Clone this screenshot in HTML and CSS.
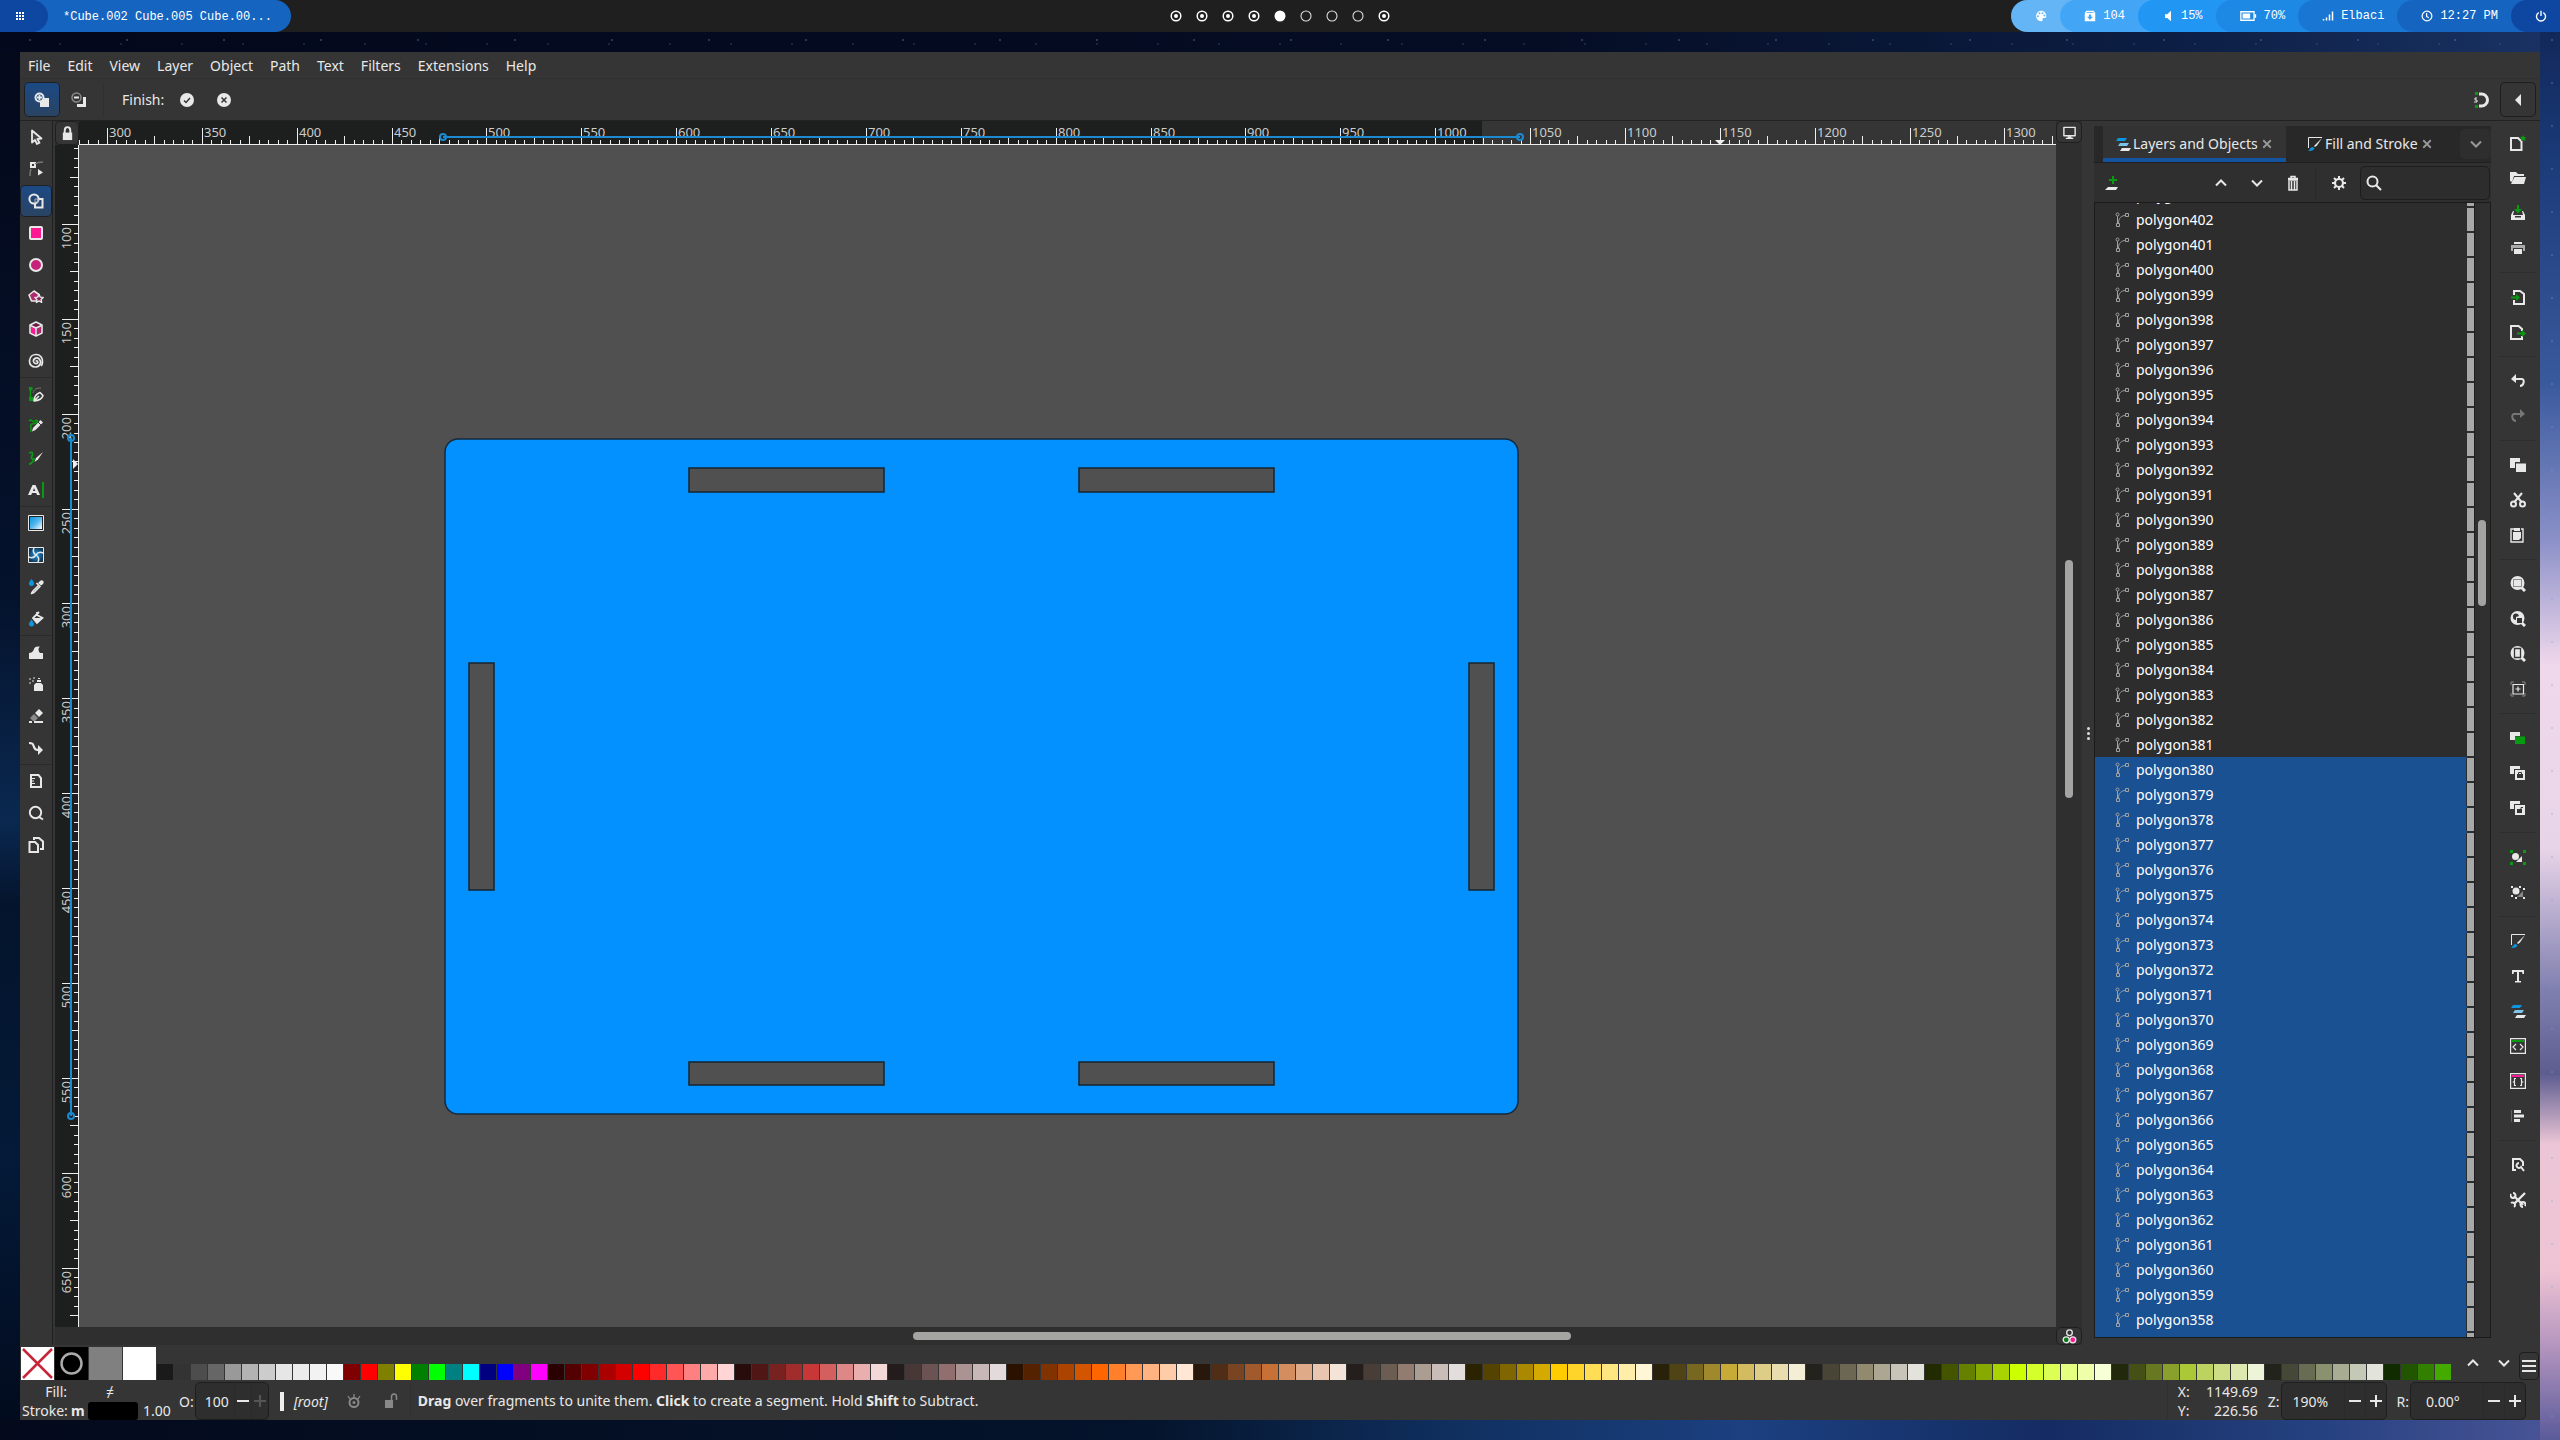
FILE: index.html
```html
<!DOCTYPE html>
<html lang="en">
<head>
<meta charset="utf-8">
<title>*Cube.002 Cube.005 Cube.00... - Inkscape</title>
<link rel="stylesheet" href="styles.css">
</head>
<body>
<svg class="sprite" aria-hidden="true">
  <symbol id="apps" viewBox="0 0 12 12"><path fill="currentColor" d="M2 2h2v2H2zm3 0h2v2H5zm3 0h2v2H8zM2 5h2v2H2zm3 0h2v2H5zm3 0h2v2H8zM2 8h2v2H2zm3 0h2v2H5zm3 0h2v2H8z"/></symbol>
  <symbol id="palette" viewBox="0 0 16 16"><path fill="currentColor" fill-rule="evenodd" d="M8 1a7 7 0 1 0 1 14c1.400 0 1.500-1 1-2-.6-1.500.2-2.500 1.500-2.500H13c1.300 0 2-1 2-2.500C15 4 12 1 8 1zM4 7a1.300 1.300 0 1 1 0 2.600A1.300 1.300 0 0 1 4 7zm2-4a1.300 1.300 0 1 1 0 2.600A1.300 1.300 0 0 1 6 3zm4 0a1.300 1.300 0 1 1 0 2.600A1.300 1.300 0 0 1 10 3zm2.500 3a1.300 1.300 0 1 1 0 2.600 1.300 1.300 0 0 1 0-2.600z"/></symbol>
  <symbol id="update" viewBox="0 0 16 16"><path fill="currentColor" fill-rule="evenodd" d="M3 1h10l2 3v11H1V4zM3 3.500h10l-.5-1h-9zM6.500 6v3H4l4 4 4-4H9.500V6z"/></symbol>
  <symbol id="volume" viewBox="0 0 16 16"><path fill="currentColor" d="M4 5.500h3L12 1v14l-5-4.500H4z"/></symbol>
  <symbol id="battery" viewBox="0 0 20 12"><path fill="none" stroke="currentColor" stroke-width="1.500" d="M1 1h15.500v10H1z"/><path fill="currentColor" d="M3 3h9v6H3zM17 4h2v4h-2z"/></symbol>
  <symbol id="signal" viewBox="0 0 16 16"><path fill="currentColor" d="M1 12h2v2H1zm4-2h2v4H5zm4-4h2v8H9zm4-4h2v12h-2z"/></symbol>
  <symbol id="clock" viewBox="0 0 16 16"><circle cx="8" cy="8" r="6.500" fill="none" stroke="currentColor" stroke-width="1.600"/><path fill="none" stroke="currentColor" stroke-width="1.600" d="M7.500 4v4.500l3 2"/></symbol>
  <symbol id="power" viewBox="0 0 16 16"><path fill="none" stroke="currentColor" stroke-width="1.800" d="M5 3.500a6 6 0 1 0 6 0M8 1v7"/></symbol>

  <symbol id="union" viewBox="0 0 16 16"><path fill="currentColor" d="M6 6h9v9H6z"/><circle cx="5.500" cy="5.500" r="4" fill="#1d4983" stroke="currentColor" stroke-width="2"/><path stroke="currentColor" stroke-width="1.800" d="M3 5.500h5M5.500 3v5"/></symbol>
  <symbol id="subtract" viewBox="0 0 16 16"><path fill="currentColor" d="M15 5v10H6v-3h6V5z"/><circle cx="5.500" cy="5.500" r="4.500" fill="none" stroke="#888" stroke-width="1.500"/><path stroke="currentColor" stroke-width="2" d="M3 5.500h5"/></symbol>
  <symbol id="accept" viewBox="0 0 16 16"><circle cx="8" cy="8" r="7" fill="currentColor"/><path fill="none" stroke="#353535" stroke-width="1.500" d="M5 8.500l2 2 4-4.500"/></symbol>
  <symbol id="cancel" viewBox="0 0 16 16"><circle cx="8" cy="8" r="7" fill="currentColor"/><path fill="none" stroke="#353535" stroke-width="1.500" d="M5.500 5.500l5 5m0-5l-5 5"/></symbol>
  <symbol id="snap" viewBox="0 0 16 16"><path fill="none" stroke="currentColor" stroke-width="3" d="M6 2h2.500a6 6 0 0 1 0 12H6"/><path fill="#0a9a12" d="M2 0h3v3H2zm0 13h3v3H2z"/><path fill="none" stroke="currentColor" d="M4 6H2v2h2v2H1"/></symbol>
  <symbol id="tri-left" viewBox="0 0 16 16"><path fill="currentColor" d="M5 8l6-6v12z"/></symbol>

  <symbol id="select" viewBox="0 0 16 16"><path fill="#444" stroke="currentColor" stroke-width="1.800" stroke-linejoin="round" d="M4 1.500v12l3-2.500 2 4 2.500-1.200-2-3.800 4-.5z"/></symbol>
  <symbol id="node" viewBox="0 0 16 16"><path fill="none" stroke="currentColor" stroke-width="2" d="M3 2h4v4H3z"/><path fill="none" stroke="#777" stroke-width="1.500" d="M7 3c3-2 5-2 8-2M3 8c-1 2-1 4-1 7"/><path fill="currentColor" d="M10 8l5 3.500-5 3z"/></symbol>
  <symbol id="builder" viewBox="0 0 16 16"><circle cx="6" cy="6" r="4.600" fill="none" stroke="currentColor" stroke-width="2"/><path fill="none" stroke="currentColor" stroke-width="2" d="M11 6h3.500v8.500H7V10"/><path fill="none" stroke="#aab" d="M7 6h3v3H7z"/></symbol>
  <symbol id="rect" viewBox="0 0 16 16"><rect x="2" y="2" width="12" height="12" rx="1" fill="#ff1a94" stroke="currentColor" stroke-width="2"/></symbol>
  <symbol id="ellipse" viewBox="0 0 16 16"><circle cx="8" cy="8" r="6" fill="#c8237a" stroke="currentColor" stroke-width="2"/></symbol>
  <symbol id="star" viewBox="0 0 16 16"><path fill="#ad2a6c" stroke="currentColor" stroke-width="1.600" stroke-linejoin="round" d="M6 2l5 3.500L9.500 12h-6L1 6z"/><path fill="#7a2450" stroke="currentColor" stroke-width="1.400" stroke-linejoin="round" d="M11 5.500l1.300 2.600 2.900.3-2.100 2 .6 3-2.700-1.500-2.600 1.500.5-3-2-2 2.800-.3z"/></symbol>
  <symbol id="box3d" viewBox="0 0 16 16"><path fill="#6a1c48" stroke="currentColor" stroke-width="1.600" stroke-linejoin="round" d="M8 1l6 3v8l-6 3-6-3V4z"/><path fill="#ff1a94" d="M3 5.500l4 2v6l-4-2z"/><path fill="#ad2a6c" d="M13 5.500l-4 2v6l4-2z"/><path fill="none" stroke="currentColor" stroke-width="1.600" d="M2.500 4.500L8 7l5.500-2.500M8 7v7.500"/></symbol>
  <symbol id="spiral" viewBox="0 0 16 16"><path fill="none" stroke="currentColor" stroke-width="1.700" d="M8 8.500c.5-1 2-.5 1.800.8-.2 1.700-3.800 1.900-4.300-.6C5 5.500 8.500 4 11 5.800c3 2.400 1.500 7.700-3 8.200-4 .3-6.800-2.500-6.500-6.500C2 3.500 5 1.300 8.500 1.500c4 .3 6.500 3.500 6 8-.2 1.500-.6 2.500-1.300 3.500"/></symbol>
  <symbol id="pen" viewBox="0 0 16 16"><path stroke="#0a9a12" stroke-width="1.500" d="M2.500 2v11"/><path fill="#0a9a12" d="M1 1h3.500v3.500H1zM1 11h4v4H1z"/><path fill="none" stroke="#777" d="M5 7c1-4 4-5 8-5"/><path fill="none" stroke="currentColor" stroke-width="1.600" stroke-linejoin="round" d="M6 15c0-5 2-7 6-8.500l3 3C14 13 11 14.500 6 15zl5-5"/></symbol>
  <symbol id="pencil" viewBox="0 0 16 16"><path fill="none" stroke="#0a9a12" stroke-width="1.500" d="M1 3c3-3 3 2 6 0 2-2 4 0 1 2-3 1-7 1-5 4 1 1-1 3 0 5"/><path fill="currentColor" d="M12.500 2L15 4.500 7.500 12l-3.500 1.500L5 10z"/><path stroke="#353535" d="M10 4l3 3"/></symbol>
  <symbol id="brush" viewBox="0 0 16 16"><path fill="none" stroke="#0a9a12" stroke-width="1.800" d="M1 3c4-2 4 1 3 3s-1 3 2 3c-1 2-2 5-5 5"/><path fill="currentColor" d="M15 2L10 9.500 6.500 12 8 8z"/></symbol>
  <symbol id="texttool" viewBox="0 0 16 16"><path fill="currentColor" fill-rule="evenodd" d="M4.500 3h3L12 13H9l-.8-2H4l-.8 2H0zM6 6L5 9h2.300z"/><path fill="#0a9a12" d="M14 0h2v16h-2z"/></symbol>
  <symbol id="gradient" viewBox="0 0 16 16"><linearGradient id="lg" x1="0" y1="0" x2="1" y2="1"><stop offset="0" stop-color="#0d96e0"/><stop offset=".5" stop-color="#55b7ee"/><stop offset="1" stop-color="#fff"/></linearGradient><path fill="#222" stroke="currentColor" d="M.5.500h15v15H.5z"/><path fill="url(#lg)" d="M2 2h12v12H2z"/></symbol>
  <symbol id="mesh" viewBox="0 0 16 16"><radialGradient id="rg"><stop offset="0" stop-color="#1da0f0"/><stop offset="1" stop-color="#143a5a"/></radialGradient><path fill="url(#rg)" stroke="currentColor" d="M.5.500h15v15H.5z"/><path fill="none" stroke="currentColor" stroke-width="1.500" d="M8 8C5 6 5 3 6 1M8 8c2-3 5-3 7-2M8 8c3 2 3 5 2 7M8 8c-2 3-5 3-7 2"/></symbol>
  <symbol id="dropper" viewBox="0 0 16 16"><path fill="#0d96e0" d="M3.500 0C5 2 6 3 6 4.500a2.500 2.500 0 0 1-5 0C1 3 2 2 3.500 0z"/><path fill="currentColor" d="M12 2c2-2 5 0 3 3l-2 1.500L10 4z"/><path fill="none" stroke="currentColor" stroke-width="1.600" stroke-linejoin="round" d="M11 6L5 12l-1.500 2.500L6 13.500l6-6M8.500 4l4 4"/></symbol>
  <symbol id="bucket" viewBox="0 0 16 16"><path fill="#0d96e0" d="M3.500 8.500C5 11 6 11.500 6 13a2.500 2.500 0 0 1-5 0c0-1.500 1-2 2.500-4.500z"/><path fill="none" stroke="currentColor" stroke-width="1.800" d="M9 1v3l5.500 3L9 12 5 7l6-6"/><path fill="currentColor" d="M5 7h9.500L9 12z"/></symbol>
  <symbol id="tweak" viewBox="0 0 16 16"><path fill="currentColor" d="M1 15V9c2 0 4-1 5-4 1-2.500 4-3 6-2-2 .5-2 4 0 6h3v6z"/></symbol>
  <symbol id="spray" viewBox="0 0 16 16"><path fill="currentColor" d="M6 9l2-2h5l2 2v6H6zm3-5h4v2H9zm1-2h2v1h-2z"/><path fill="#888" d="M1 2h2v2H1zm4-1h2v2H5zM1 6h2v2H1zm3-2h2v2H4z"/></symbol>
  <symbol id="eraser" viewBox="0 0 16 16"><path fill="currentColor" d="M11 1l4 4-4 4-4-4z"/><path fill="#8a8a8a" d="M6 6l4 4-3 3H5L2 10z"/><path fill="currentColor" d="M1 13h3v2H1zm5 0h9v2H6z"/></symbol>
  <symbol id="connector" viewBox="0 0 16 16"><path fill="none" stroke="currentColor" stroke-width="2.200" d="M1 3c4 0 4 1 5 4 1 2.500 2 3 6 3"/><path fill="currentColor" d="M10 5l5 5-5 5z"/></symbol>
  <symbol id="measure" viewBox="0 0 16 16"><path fill="none" stroke="currentColor" stroke-width="2" d="M3 2h7.500l2.500 3v9H3z"/><path stroke="currentColor" d="M3 5.500h4m-4 2.500h3m-3 2.500h4"/></symbol>
  <symbol id="zoomtool" viewBox="0 0 16 16"><circle cx="7.500" cy="7.500" r="5.700" fill="none" stroke="currentColor" stroke-width="1.900"/><path stroke="currentColor" stroke-width="2" d="M11 12l4 2.500"/></symbol>
  <symbol id="pages" viewBox="0 0 16 16"><path fill="none" stroke="currentColor" stroke-width="2" d="M1.500 5H7l3 3v7H1.500zM6 3V1h5l4 3.500V12h-3"/></symbol>

  <symbol id="lock" viewBox="0 0 16 16"><path fill="currentColor" d="M3 7h10v8H3z"/><path fill="none" stroke="currentColor" stroke-width="2" d="M5 8V5c0-5 6-5 6 0v3"/></symbol>
  <symbol id="unlock" viewBox="0 0 16 16"><path fill="currentColor" d="M2 7h8v8H2z"/><path fill="none" stroke="currentColor" stroke-width="1.500" d="M8.500 8V4c0-4 5-4 5 0v3"/></symbol>
  <symbol id="monitor" viewBox="0 0 16 16"><path fill="none" stroke="currentColor" stroke-width="1.500" stroke-linejoin="round" d="M2 2.500h12v9H2z"/><path fill="currentColor" d="M6 12h4v1.500h2V15H4v-1.500h2z"/></symbol>
  <symbol id="cms" viewBox="0 0 16 16"><g stroke="currentColor" stroke-width="1.400"><circle cx="8" cy="4" r="3" fill="none"/><circle cx="4.500" cy="11.500" r="3.200" fill="#0a7a12"/><circle cx="11.500" cy="11.500" r="3.200" fill="#ff1a94"/></g></symbol>

  <symbol id="layers" viewBox="0 0 16 16"><path fill="#0d96e0" d="M3 2h9l-2 3H1z"/><path fill="#7cc4ec" d="M5 7h9l-2 3H3z"/><path fill="currentColor" d="M7 12h9l-2 3H5z"/></symbol>
  <symbol id="fillstroke" viewBox="0 0 16 16"><path fill="none" stroke="currentColor" d="M1.500 12V1.500H15"/><path fill="currentColor" d="M15 2L10 9.500 8 11 7 10z"/><path fill="#0d96e0" d="M6 11l1.500 1.500C6 15 3 15 1 15c2-1 2-4 5-4z"/></symbol>
  <symbol id="cross" viewBox="0 0 16 16"><path stroke="currentColor" stroke-width="2.400" d="M3 3l10 10m0-10l-10 10"/></symbol>
  <symbol id="down" viewBox="0 0 16 16"><path fill="none" stroke="currentColor" stroke-width="2" d="M3 5.500l5 5 5-5"/></symbol>
  <symbol id="up" viewBox="0 0 16 16"><path fill="none" stroke="currentColor" stroke-width="2" d="M3 10.500l5-5 5 5"/></symbol>
  <symbol id="addlayer" viewBox="0 0 16 16"><path fill="#0a9a12" d="M8 1h2v3h3v2h-3v3H8V6H5V4h3z"/><path fill="currentColor" d="M4 12h10l-2 3H1z"/></symbol>
  <symbol id="trash" viewBox="0 0 16 16"><path fill="none" stroke="currentColor" stroke-width="1.500" d="M3 5h10M4 6v9h8V6M3 3.500h10M6 3V1.500h4V3M6.500 6v9M9.500 6v9"/></symbol>
  <symbol id="gear" viewBox="0 0 16 16"><circle cx="8" cy="8" r="4" fill="none" stroke="currentColor" stroke-width="2.200"/><path stroke="currentColor" stroke-width="2" d="M8 1v3m0 8v3M1 8h3m8 0h3M3 3l2 2m6 6l2 2m0-10l-2 2m-6 6l-2 2"/></symbol>
  <symbol id="search" viewBox="0 0 16 16"><circle cx="6.500" cy="6.500" r="5" fill="none" stroke="currentColor" stroke-width="2"/><path stroke="currentColor" stroke-width="2.200" d="M10 10l5 5"/></symbol>
  <symbol id="path" viewBox="0 0 15 16"><g fill="none" stroke="currentColor" stroke-width="1"><circle cx="2.500" cy="2.500" r="1.500"/><path d="M10.500 1.500h3v3h-3zM1.500 11.500h3v3h-3zM2.500 4v7.500M3.500 11c0-5 3-7.500 7-7.500"/></g></symbol>

  <symbol id="new" viewBox="0 0 16 16"><path fill="none" stroke="currentColor" stroke-width="2" d="M1 3h7l3.500 3.500V15H1z"/><path fill="#0a9a12" d="M13 0l1 2h2l-1 1.500.5 2.500L13 5l-2 1 .3-2.500L10 2h2z"/></symbol>
  <symbol id="open" viewBox="0 0 16 16"><path fill="currentColor" d="M0 2h6l2 2h6v2H4l-2 6-2-1zM4.500 7H16l-2 7H1z"/></symbol>
  <symbol id="save" viewBox="0 0 16 16"><path fill="#0a9a12" d="M7 0h2v4h3L8 8.500 4 4h3z"/><path fill="currentColor" fill-rule="evenodd" d="M3 6h1l-1 4h10l-1-4h1l2 4v5H1v-5zm2 5v1.500h6V11z"/></symbol>
  <symbol id="print" viewBox="0 0 16 16"><path fill="currentColor" d="M4 2h8v2H4zM4 9h8v5H4z"/><path fill="#aaa" d="M1 5h14v6h-2V8H3v3H1z"/></symbol>
  <symbol id="import" viewBox="0 0 16 16"><path fill="none" stroke="currentColor" stroke-width="2" d="M4 6V2h6l4 3v10H4v-4"/><path fill="#0a9a12" d="M1 7.500h5V5l4 3.500L6 12V9.500H1z"/></symbol>
  <symbol id="export" viewBox="0 0 16 16"><path fill="none" stroke="currentColor" stroke-width="2" d="M12 7V5L8.500 2H1v13h11v-3"/><path fill="#0a9a12" d="M7 8.500h5V6l4 3.500-4 3.500v-2.500H7z"/></symbol>
  <symbol id="undo" viewBox="0 0 16 16"><path fill="none" stroke="currentColor" stroke-width="2" d="M5 6h7c3 0 2 7-2 7"/><path fill="currentColor" d="M6 1v9L1 6z"/></symbol>
  <symbol id="redo" viewBox="0 0 16 16"><path fill="none" stroke="currentColor" stroke-width="2" d="M11 6H4C1 6 2 13 6 13"/><path fill="currentColor" d="M10 1v9l5-4z"/></symbol>
  <symbol id="copy" viewBox="0 0 16 16"><path fill="currentColor" d="M0 1h10v4H5v6H0zM6 6.500h10V15H6z"/></symbol>
  <symbol id="cut" viewBox="0 0 16 16"><g fill="none" stroke="currentColor" stroke-width="2"><circle cx="3.500" cy="12" r="2.500"/><circle cx="12.500" cy="12" r="2.500"/><path d="M4 1l7.500 9M12 1l-7.500 9"/></g></symbol>
  <symbol id="paste" viewBox="0 0 16 16"><path fill="none" stroke="currentColor" stroke-width="1.400" d="M4 2H1v13h12V2h-2"/><path fill="currentColor" d="M4 1h6v3H4zM3 5h8v6l-2 2H3z"/></symbol>
  <symbol id="zsel" viewBox="0 0 16 16"><circle cx="7.500" cy="7" r="7" fill="currentColor"/><path stroke="currentColor" stroke-width="3" d="M11 11l4 4"/><path fill="none" stroke="#353535" stroke-dasharray="1 1" d="M3.500 3.500h8v7h-8z"/></symbol>
  <symbol id="zdraw" viewBox="0 0 16 16"><circle cx="7.500" cy="7" r="7" fill="currentColor"/><path stroke="currentColor" stroke-width="3" d="M11 11l4 4"/><path fill="#353535" d="M7 7h5v5H7zM3 6a3 3 0 0 1 6-1L6 6v3a3 3 0 0 1-3-3z"/></symbol>
  <symbol id="zpage" viewBox="0 0 16 16"><circle cx="7.500" cy="7" r="7" fill="currentColor"/><path stroke="currentColor" stroke-width="3" d="M11 11l4 4"/><path fill="none" stroke="#353535" stroke-width="1.300" d="M4.500 2.500h6v9h-6z"/></symbol>
  <symbol id="zcenter" viewBox="0 0 16 16"><path fill="none" stroke="#888" d="M1 4V1h3m8 0h3v3m0 8v3h-3m-8 0H1v-3"/><path fill="none" stroke="currentColor" stroke-width="1.200" d="M3 3.500h10.500v9.500H3zM8 5.500v5M5.500 8h5"/></symbol>
  <symbol id="dup" viewBox="0 0 16 16"><path fill="currentColor" d="M0 2h10v4H5v4H0z"/><path fill="#0a9a12" d="M5 6.500h10V14H5z"/></symbol>
  <symbol id="clone" viewBox="0 0 16 16"><path fill="currentColor" d="M0 1h10v3H4v5H0zM5 5h10v10H5z"/><path fill="#353535" d="M7 9h6v4H7z"/><path fill="none" stroke="#353535" d="M8.500 9V7.500h3V9"/></symbol>
  <symbol id="unclone" viewBox="0 0 16 16"><path fill="currentColor" d="M0 1h10v3H4v5H0zM5 5h10v10H5z"/><path fill="#353535" d="M7 9h5v4H7z"/><path fill="none" stroke="#353535" d="M11 9V7.500h2"/></symbol>
  <symbol id="group" viewBox="0 0 16 16"><path fill="#0a9a12" d="M0 1h3v3H0zm13 0h3v3h-3zM0 13h3v3H0zm13 0h3v3h-3z"/><path fill="currentColor" d="M12 7v6H6l2-2z"/><circle cx="5.500" cy="7.500" r="3.500" fill="currentColor"/></symbol>
  <symbol id="ungroup" viewBox="0 0 16 16"><path fill="currentColor" d="M1 2h2v2H1zm8 0h2v2H9zm4 2h2v2h-2zM1 11h2v2H1zm4 2h2v2H5zm8 0h2v2h-2z"/><path fill="#888" d="M13 7v6H7l2-2z"/><circle cx="6" cy="7" r="3.500" fill="currentColor"/></symbol>
  <symbol id="type" viewBox="0 0 16 16"><path fill="currentColor" d="M2 2h12v4h-1.500L12 4H9v9h2v1.500H5V13h2V4H4l-.5 2H2z"/></symbol>
  <symbol id="xml" viewBox="0 0 16 16"><path fill="none" stroke="currentColor" stroke-width="1.200" d="M.6.600h14.800v14.800H.6zM6 6l-3 3 3 3m4-6l3 3-3 3"/><path fill="#0a9a12" d="M2 2h12v2H2z"/></symbol>
  <symbol id="css" viewBox="0 0 16 16"><path fill="none" stroke="currentColor" stroke-width="1.200" d="M.6.600h14.800v14.800H.6zM6 5.500H4.500v3l-1 .5 1 .5v3H6m4-7h1.500v3l1 .5-1 .5v3H10"/><path fill="#ff1a94" d="M2 2h12v2H2z"/></symbol>
  <symbol id="align" viewBox="0 0 16 16"><path fill="#0a9a12" d="M1 2h1v12H1z"/><path fill="currentColor" d="M4 2h7v3H4zm0 4.500h10v3H4zM4 11h6v3H4z"/></symbol>
  <symbol id="docprops" viewBox="0 0 16 16"><path fill="none" stroke="currentColor" stroke-width="2" d="M6 13H3V2h7l3 3v4"/><path fill="none" stroke="currentColor" stroke-width="2" d="M9 6a2.500 2.500 0 1 0 2 4l3 4"/></symbol>
  <symbol id="prefs" viewBox="0 0 16 16"><path stroke="currentColor" stroke-width="2.400" d="M15 1L4 12M4 4l9 9"/><path fill="none" stroke="currentColor" stroke-width="2" d="M1 2a2.500 2.500 0 1 0 2-1M15 14a2.500 2.500 0 1 0-2 1M1 11a2.500 2.500 0 1 1 3 4"/></symbol>
  <symbol id="eye" viewBox="0 0 16 16"><circle cx="8" cy="9.500" r="4.500" fill="none" stroke="currentColor" stroke-width="2"/><circle cx="8" cy="9.500" r="1.500" fill="currentColor"/><path stroke="currentColor" stroke-width="1.300" d="M8 5V1M4 6L2 3m10 3l2-3"/></symbol>
  <symbol id="minus" viewBox="0 0 16 16"><path fill="currentColor" d="M2 7h12v2H2z"/></symbol>
  <symbol id="plus" viewBox="0 0 16 16"><path fill="currentColor" d="M2 7h5V2h2v5h5v2H9v5H7V9H2z"/></symbol>
  <symbol id="menu" viewBox="0 0 16 16"><path fill="currentColor" d="M1 2h14v2H1zm0 5h14v2H1zm0 5h14v2H1z"/></symbol>
  <symbol id="ws-used" viewBox="0 0 12 12"><circle cx="6" cy="6" r="4.800" fill="none" stroke="#fff" stroke-width="1.500"/><circle cx="6" cy="6" r="2" fill="#fff"/></symbol>
  <symbol id="ws-here" viewBox="0 0 12 12"><circle cx="6" cy="6" r="5.500" fill="#fff"/></symbol>
  <symbol id="ws-free" viewBox="0 0 12 12"><circle cx="6" cy="6" r="5" fill="none" stroke="#ddd" stroke-width="1.100"/></symbol>
</svg>

<header class="topbar">
  <div class="topbar-left">
    <button class="pill pill-apps" aria-label="Applications"><svg><use href="#apps"/></svg></button>
    <span class="pill pill-title">*Cube.002 Cube.005 Cube.00...</span>
  </div>
  <nav class="workspaces" aria-label="Workspaces">
    <svg><use href="#ws-used"/></svg><svg><use href="#ws-used"/></svg><svg><use href="#ws-used"/></svg><svg><use href="#ws-used"/></svg><svg><use href="#ws-here"/></svg><svg><use href="#ws-free"/></svg><svg><use href="#ws-free"/></svg><svg><use href="#ws-free"/></svg><svg><use href="#ws-used"/></svg>
  </nav>
  <div class="topbar-right">
    <span class="status s1"><svg><use href="#palette"/></svg></span>
    <span class="status s2"><svg><use href="#update"/></svg>104</span>
    <span class="status s3"><svg><use href="#volume"/></svg>15%</span>
    <span class="status s4"><svg class="battery"><use href="#battery"/></svg>70%</span>
    <span class="status s5"><svg><use href="#signal"/></svg>Elbaci</span>
    <span class="status s6"><svg><use href="#clock"/></svg>12:27 PM</span>
    <button class="status s7" aria-label="Power"><svg><use href="#power"/></svg></button>
  </div>
</header>

<main class="desktop">
<div class="window">
  <nav class="menubar">
    <button>File</button><button>Edit</button><button>View</button><button>Layer</button><button>Object</button><button>Path</button><button>Text</button><button>Filters</button><button>Extensions</button><button>Help</button>
  </nav>
  <div class="toolbar">
    <button class="mode active" aria-label="Union"><svg><use href="#union"/></svg></button>
    <button class="mode" aria-label="Subtract"><svg><use href="#subtract"/></svg></button>
    <span class="finish">Finish:</span>
    <button class="mode" aria-label="Accept"><svg><use href="#accept"/></svg></button>
    <button class="mode" aria-label="Cancel"><svg><use href="#cancel"/></svg></button>
    <button class="mode push" aria-label="Snapping"><svg><use href="#snap"/></svg></button>
    <button class="mode framed" aria-label="Snap options"><svg><use href="#tri-left"/></svg></button>
  </div>

  <div class="work">
    <div class="toolbox" data-icons="select node builder* rect ellipse star box3d spiral | pen pencil brush texttool | gradient mesh dropper bucket | tweak spray eraser connector | measure zoomtool pages"></div>

    <div class="editor">
      <button class="corner" aria-label="Lock guides"><svg><use href="#lock"/></svg></button>
      <svg class="ruler-h" id="ruler-h"></svg>
      <button class="corner display" aria-label="Display mode"><svg><use href="#monitor"/></svg></button>
      <svg class="ruler-v" id="ruler-v"></svg>
      <svg class="canvas">
        <g fill="#0291ff" stroke="#152a3c" stroke-width="1.500">
          <rect x="366" y="294" width="1073" height="675" rx="13"/>
        </g>
        <g fill="#505050" stroke="#17242f" stroke-width="1.500">
          <rect x="610" y="323" width="195" height="24"/>
          <rect x="1000" y="323" width="195" height="24"/>
          <rect x="610" y="917" width="195" height="23"/>
          <rect x="1000" y="917" width="195" height="23"/>
          <rect x="390" y="518" width="25" height="227"/>
          <rect x="1390" y="518" width="25" height="227"/>
        </g>
      </svg>
      <div class="vscroll"><span></span></div>
      <div class="hscroll"><span></span></div>
      <button class="corner cms" aria-label="Color management"><svg><use href="#cms"/></svg></button>
    </div>

    <div class="handle"><i></i><i></i><i></i></div>

    <section class="dock">
      <div class="tabs">
        <div class="tab current"><button class="tab-label"><svg><use href="#layers"/></svg>Layers and Objects</button><button class="tab-close" aria-label="Close"><svg><use href="#cross"/></svg></button></div>
        <div class="tab second"><button class="tab-label"><svg><use href="#fillstroke"/></svg>Fill and Stroke</button><button class="tab-close" aria-label="Close"><svg><use href="#cross"/></svg></button></div>
        <button class="tab-more" aria-label="More"><svg><use href="#down"/></svg></button>
      </div>
      <div class="panel-tools">
        <button class="add" aria-label="Add layer"><svg><use href="#addlayer"/></svg></button>
        <button aria-label="Raise"><svg><use href="#up"/></svg></button>
        <button aria-label="Lower"><svg><use href="#down"/></svg></button>
        <button aria-label="Delete"><svg><use href="#trash"/></svg></button>
        <button class="settings" aria-label="Settings"><svg><use href="#gear"/></svg></button>
        <label class="search"><svg><use href="#search"/></svg><input type="text" aria-label="Search"></label>
      </div>
      <div class="tree">
        <ul class="objects" id="objects"></ul>
        <div class="tree-scroll"><span></span></div>
      </div>
    </section>

    <div class="commands" data-icons="new open save print | import export | undo redo- | copy cut paste | zsel zdraw zpage zcenter | dup clone unclone | group ungroup | fillstroke type layers xml css align | docprops prefs"></div>
  </div>

  <div class="palette-bar">
    <div class="pinned">
      <button class="none" aria-label="None"><svg viewBox="0 0 33 33"><path stroke="#c4263a" stroke-width="2.500" d="M2 2l29 29M31 2L2 31"/></svg></button>
      <button class="black" aria-label="Black"><svg viewBox="0 0 33 33"><circle cx="16.500" cy="16.500" r="10" fill="none" stroke="#aaa" stroke-width="2.500"/></svg></button>
      <button class="grey" aria-label="Grey"></button>
      <button class="white" aria-label="White"></button>
    </div>
    <div class="swatches" id="swatches"></div>
    <div class="palette-nav">
      <button aria-label="Previous row"><svg><use href="#up"/></svg></button>
      <button aria-label="Next row"><svg><use href="#down"/></svg></button>
      <button class="palette-menu" aria-label="Palette menu"><svg><use href="#menu"/></svg></button>
    </div>
  </div>

  <footer class="statusbar">
    <div class="style">
      <span class="key">Fill:</span><span class="unequal">≠</span><span></span>
      <span class="key">Stroke:</span><span class="stroke"><b>m</b><i class="chip"></i></span><span>1.00</span>
    </div>
    <label class="letter" for="opacity">O:</label>
    <div class="spin spin-o"><input id="opacity" value="100"><button aria-label="Less"><svg><use href="#minus"/></svg></button><button class="off" aria-label="More"><svg><use href="#plus"/></svg></button></div>
    <button class="layer"><em>[root]</em></button>
    <button class="dim" aria-label="Visibility"><svg><use href="#eye"/></svg></button>
    <button class="dim" aria-label="Lock"><svg><use href="#unlock"/></svg></button>
    <p class="hint"><b>Drag</b> over fragments to unite them. <b>Click</b> to create a segment. Hold <b>Shift</b> to Subtract.</p>
    <dl class="coords"><dt>X:</dt><dd>1149.69</dd><dt>Y:</dt><dd>226.56</dd></dl>
    <label class="letter" for="zoom">Z:</label>
    <div class="spin spin-z"><input id="zoom" value="190%"><button aria-label="Zoom out"><svg><use href="#minus"/></svg></button><button aria-label="Zoom in"><svg><use href="#plus"/></svg></button></div>
    <label class="letter rot" for="rotation">R:</label>
    <div class="spin spin-r"><input id="rotation" value="0.00°"><button aria-label="Rotate left"><svg><use href="#minus"/></svg></button><button aria-label="Rotate right"><svg><use href="#plus"/></svg></button></div>
  </footer>
</div>
</main>
<script src="app.js"></script>
</body>
</html>
```
FILE: styles.css
```css
* { box-sizing: border-box; }

body {
  margin: 0;
  height: 100vh;
  display: flex;
  flex-direction: column;
  overflow: hidden;
  color: #e8e8e8;
  font: 14px/20px "Noto Sans", "Open Sans", sans-serif;
  background: #04102a;
}

button, input {
  margin: 0;
  padding: 0;
  border: 0;
  background: none;
  color: inherit;
  font: inherit;
}

button { display: flex; align-items: center; justify-content: center; }
svg { width: 16px; height: 16px; flex: none; display: block; }
.sprite { position: absolute; width: 0; height: 0; }

/* Desktop panel */
.topbar {
  flex: none;
  height: 32px;
  display: grid;
  grid-template-columns: 1fr auto 1fr;
  background: #1f1f1f;
  color: #fff;
  font: 12px/34px "Liberation Mono", monospace;
}
.topbar svg { width: 12px; height: 12px; }
.topbar-left, .topbar-right { display: flex; height: 32px; }
.topbar-right { justify-content: flex-end; }
.pill { border-radius: 0 16px 16px 0; white-space: pre; }
.pill-apps { width: 48px; padding-right: 9px; background: #0d47a1; z-index: 1; }
.pill-title { margin-left: -16px; padding: 0 19px 0 31px; background: #1565c0; }
.workspaces { display: flex; align-items: center; gap: 14px; }
.status {
  display: flex;
  align-items: center;
  gap: 7px;
  padding: 0 13px 0 24px;
  border-radius: 16px 0 0 16px;
}
.topbar .battery { width: 17px; }
.s1 { background: #64b5f6; box-shadow: 16px 0 #64b5f6; }
.s2 { background: #42a5f5; box-shadow: 16px 0 #42a5f5; }
.s3 { background: #2196f3; box-shadow: 16px 0 #2196f3; }
.s4 { background: #1e88e5; box-shadow: 16px 0 #1e88e5; }
.s5 { background: #1976d2; box-shadow: 16px 0 #1976d2; }
.s6 { background: #1565c0; box-shadow: 16px 0 #1565c0; }
.s7 { background: #0d47a1; }

/* Wallpaper: night sky that turns pink at the right edge */
.desktop {
  flex: 1;
  min-height: 0;
  padding: 20px;
  background:
    radial-gradient(1px 1px at 30px 8px, #6fa8c8, transparent) 0 0 / 97px 43px,
    radial-gradient(1px 1px at 60px 12px, #3a6a90, transparent) 0 0 / 61px 37px,
    linear-gradient(#12285a 0, #1a3a78 9%, #3a5a9e 25%, #8a90c8 36%, #f0d8ec 45%, #e8d4e8 58%, #8080b0 68%, #5d5d90 74%, #ecc6d6 79%, #eec4d4 88%, #b898c0 93%, #5a5a9a 100%) right / 20px 100% no-repeat,
    linear-gradient(90deg, #040a1c, #04142c 45%, #103060 57%, #1c4080 68%, #142c62 80%, #24407e 90%, #4a5598) bottom / 100% 20px no-repeat,
    linear-gradient(90deg, #03081c, #050d24 60%, #0c1e44 85%, #1a3364) top / 100% 20px no-repeat,
    linear-gradient(#04081a, #04122c 40%, #0a2850 56%, #04142c 62%, #041a38 80%, #020a1c);
}

/* Application window */
.window {
  height: 100%;
  display: flex;
  flex-direction: column;
  background: #353535;
}
.menubar { flex: none; height: 27px; display: flex; gap: 17px; padding: 2px 8px 0; border-bottom: 1px solid #303030; }
.toolbar { flex: none; height: 41px; display: flex; align-items: center; gap: 1px; padding: 0 4px; }
.mode { width: 36px; height: 35px; border-radius: 5px; }
.mode.active, .tool.active { background: linear-gradient(#1c4a86, #2a4361); box-shadow: inset 0 0 0 1px #1c1f24; }
.mode.framed { box-shadow: inset 0 0 0 1px #1e1e1e; }
.finish { margin: 0 4px 0 5px; padding-left: 18px; border-left: 1px solid #303030; line-height: 34px; }
.mode.push { margin-left: auto; }

.work { flex: 1; min-height: 0; display: flex; border-top: 1px solid #222; }
.toolbox { width: 33px; margin-right: 2px; border-right: 1px solid #202020; }
.tool { width: 32px; height: 32px; border-radius: 5px; }
.toolbox hr { margin: 0; border: 0; border-top: 1px solid #2b2b2b; }

.editor {
  flex: 1;
  min-width: 0;
  display: grid;
  grid-template: 24px 1fr 18px / 24px 1fr 26px;
  background: #2f2f2f;
}
.corner { border: 1px solid #1f1f1f; border-radius: 5px; background: #353535; }
.corner.display { margin-bottom: 2px; }
.corner svg { width: 15px; height: 15px; }
.ruler-h, .ruler-v, .canvas { width: 100%; height: 100%; overflow: hidden; }
.ruler-h { background: #353535; }
.ruler-v { background: #1d1f1e; }
.ruler-h text, .ruler-v text { font-size: 13px; fill: #ccc; }
.canvas { background: #505050; }
.vscroll { padding: 415px 9px 0; }
.vscroll span { display: block; height: 238px; border-radius: 4px; background: #a4a4a2; }
.hscroll { grid-column: 1 / 3; padding: 5px 0 0 858px; }
.hscroll span { display: block; width: 658px; height: 8px; border-radius: 4px; background: #a4a4a2; }

.handle { width: 12px; display: flex; flex-direction: column; align-items: center; justify-content: center; gap: 2px; }
.handle i { width: 3px; height: 3px; border-radius: 2px; background: #ddd; }

/* Dock */
.dock { width: 397px; margin: 5px 0 7px; display: flex; flex-direction: column; background: #2f2f2f; }
.tabs { flex: none; height: 37px; display: flex; padding-left: 9px; background: #282828; border-bottom: 1px solid #1f1f1f; }
.tab { display: flex; align-items: center; gap: 3px; padding-left: 12px; }
.tab.current { width: 183px; background: #333; border-bottom: 4px solid #15539e; padding-top: 3px; }
.tab.second { width: 165px; padding-left: 21px; }
.tab-label { gap: 2px; }
.tab-close svg { width: 12px; height: 12px; color: #999; }
.tab-more { margin: 3px 0 3px auto; width: 31px; border-radius: 5px; background: #2e2e2e; color: #999; }
.panel-tools { flex: none; height: 39px; display: flex; align-items: center; }
.panel-tools button { width: 36px; height: 34px; }
.panel-tools .add { margin-right: auto; }
.panel-tools .settings { width: 45px; margin-left: 4px; padding-left: 1px; border-left: 1px solid #2a2a2a; }
.search { width: 130px; height: 34px; margin-right: 1px; display: flex; align-items: center; gap: 8px; padding: 0 5px; border: 1px solid #1d1d1d; border-radius: 5px; background: #2d2d2d; }
.search input { width: 90px; }
.tree { flex: 1; min-height: 0; display: flex; border: 1px solid #1b1b1b; background: #2d2d2d; }
.objects { flex: 1; margin: 0; padding: 0; list-style: none; overflow: hidden; }
.objects li { height: 25px; display: flex; align-items: center; gap: 6px; padding-left: 20px; color: #fff; }
.objects li svg { width: 15px; color: #a0a0a0; }
.objects li::after { content: ""; width: 7px; height: 23px; margin-left: auto; border-left: 1px solid #2d2d2d; background: #a8a8a8; }
.objects li.selected { background: linear-gradient(90deg, #1a5193 372px, #2d2d2d 372px); }
.tree-scroll { width: 16px; padding: 317px 4px 0 3px; background: #303030; border-left: 1px solid #1f1f1f; }
.tree-scroll span { display: block; height: 86px; border-radius: 4px; background: #a4a4a2; }

.commands { width: 49px; padding: 4px 4px 0 9px; }
.command { width: 35px; height: 35px; }
.command.off { color: #777; }
.commands hr { margin: 7px 0 6px; border: 0; border-top: 1px solid #2d2d2d; }

/* Palette */
.palette-bar { flex: none; height: 35px; display: flex; align-items: flex-end; }
.pinned { display: flex; gap: 1px; padding-left: 1px; }
.pinned button { width: 33px; height: 33px; }
.pinned svg { width: 33px; height: 33px; }
.none, .white { background: #fff; }
.black { background: #000; }
.grey { background: #808080; }
.swatches { display: flex; gap: 1px; padding-left: 1px; }
.swatch { width: 16px; height: 16px; }
.palette-nav { height: 35px; margin-left: auto; display: flex; align-items: center; }
.palette-nav button { width: 31px; height: 35px; }
.palette-nav .palette-menu { width: 20px; height: 28px; margin: 6px 1px 0 0; border: 1px solid #1d1d1d; border-radius: 4px; }

/* Status bar */
.statusbar { flex: none; height: 40px; display: flex; align-items: center; line-height: 19px; padding-top: 2px; }
.style { display: grid; grid-template-columns: 45px 68px auto; column-gap: 4px; width: 159px; padding-left: 2px; }
.key { text-align: right; }
.unequal { padding-left: 35px; }
.stroke { display: flex; align-items: center; gap: 3px; }
.chip { width: 50px; height: 18px; border-radius: 3px; background: #000; }
.letter { margin-right: 1px; }
.spin { height: 38px; display: flex; align-items: center; border: 1px solid #1e1e1e; border-radius: 5px; background: #2e2e2e; }
.spin input { flex: 1; min-width: 0; padding-left: 9px; }
.spin button { width: 21px; height: 100%; border-left: 1px solid #2a2a2a; }
.spin-o { width: 74px; }
.spin-o button { width: 17px; }
.spin .off { color: #555; }
.spin-z { width: 106px; }
.spin-r { width: 116px; margin-right: 14px; }
.spin-z input { padding-left: 11px; }
.spin-r input { padding-left: 15px; }
.layer { margin: 0 8px 0 11px; padding-left: 10px; border-left: 4px solid #eee; }
.dim { width: 37px; color: #888; }
.hint { margin: 0; padding-left: 7px; border-left: 1px solid #303030; line-height: 36px; }
.coords { margin: 0 10px 0 auto; width: 91px; display: grid; grid-template-columns: auto 1fr; padding-left: 10px; border-left: 1px solid #303030; }
.coords dd { margin: 0; text-align: right; }
.rot { margin-left: 10px; }
```
FILE: app.js
```js
const icon = (name) => `<svg><use href="#${name}"/></svg>`;

// Icon columns: "|" is a separator, "*" marks the active tool, "-" a disabled one.
document.querySelectorAll('[data-icons]').forEach((column) => {
  const cls = column.className === 'toolbox' ? 'tool' : 'command';
  column.innerHTML = column.dataset.icons.split(' ').map((token) => {
    if (token === '|') return '<hr>';
    const name = token.replace(/[*-]$/, '');
    const state = token.endsWith('*') ? ' active' : token.endsWith('-') ? ' off' : '';
    return `<button class="${cls}${state}" aria-label="${name}">${icon(name)}</button>`;
  }).join('');
});

// Object list
const rows = [];
for (let n = 403; n >= 357; n--) {
  rows.push(`<li class="${n <= 380 ? 'selected' : ''}">${icon('path')}polygon${n}</li>`);
}
const list = document.getElementById('objects');
list.innerHTML = rows.join('');
list.scrollTop = 21;

// Palette
const colors = `1a1a1a 333333 4d4d4d 666666 999999 b3b3b3 cccccc e6e6e6 ececec f2f2f2 f9f9f9
800000 ff0000 808000 ffff00 008000 00ff00 008080 00ffff 000080 0000ff 800080 ff00ff
2b0000 550000 800000 aa0000 d40000 ff0000 ff2a2a ff5555 ff8080 ffaaaa ffd5d5
280b0b 501616 782121 a02c2c c83737 d35f5f de8787 e9afaf f4d7d7 241c1c 483737 6c5353 916f6f ac9393 c8b7b7 e3dbdb
2b1100 552200 803300 aa4400 d45500 ff6600 ff7f2a ff9955 ffb380 ffccaa ffe6d5
28170b 502d16 784421 a05a2c c87137 d38d5f deaa87 e9c6af f4e3d7 241f1c 483e37 6c5d53 917c6f ac9d93 c8beb7 e3dedb
2b2200 554400 806600 aa8800 d4aa00 ffcc00 ffd42a ffdd55 ffe680 ffeeaa fff6d5
28220b 504416 786721 a0892c c8ab37 d3bc5f decd87 e9ddaf f4eed7 24221c 484537 6c6753 918a6f aca793 c8c4b7 e3e2db
222b00 445500 668000 88aa00 aad400 ccff00 d4ff2a ddff55 e5ff80 eeffaa f6ffd5
22280b 445016 677821 89a02c abc837 bcd35f cdde87 dde9af eef4d7 22241c 454837 676c53 8a916f a7ac93 c4c8b7 e2e3db
112b00 225500 338000 44aa00`.split(/\s+/);
document.getElementById('swatches').innerHTML = colors
  .map((c) => `<button class="swatch" style="background:#${c}" aria-label="#${c}"></button>`).join('');

// Rulers: a major mark every 50 units, ten divisions between marks
const STEP = 94.87;
function marks(origin, from, to, draw) {
  for (let i = -10; i <= (to - from) / 5; i++) {
    const kind = i % 10 === 0 ? 16 : i % 5 === 0 ? 8 : 4;
    const at = Math.round(origin + (i * STEP) / 10);
    if (at >= 0) draw(at, kind, from + i * 5);
  }
}

let h = '<rect width="1403" height="24" fill="#1d1f1e"/>';
marks(28, 300, 1340, (x, len, value) => {
  h += `<rect x="${x}" y="${23 - len}" width="1" height="${len}" fill="#eee"/>`;
  if (len === 16) h += `<text x="${x + 2}" y="16">${value}</text>`;
});
h += '<rect y="23" width="100%" height="1" fill="#eee"/>';
h += '<path d="M364 16H1441" stroke="#1b8ad0" stroke-width="2"/>';
h += '<g fill="none" stroke="#1b8ad0" stroke-width="2"><circle cx="364" cy="16" r="3"/><circle cx="1441" cy="16" r="3"/></g>';
h += '<path d="M1636 19h10l-5 5z" fill="#eee"/>';
document.getElementById('ruler-h').innerHTML = h;

let v = '';
marks(79, 100, 675, (y, len, value) => {
  v += `<rect x="${23 - len}" y="${y}" width="${len}" height="1" fill="#eee"/>`;
  if (len === 16) v += `<text transform="translate(16 ${y + 3}) rotate(-90)" text-anchor="end">${value}</text>`;
});
v += '<rect x="23" width="1" height="100%" fill="#eee"/>';
v += '<path d="M16 293V971" stroke="#1b8ad0" stroke-width="2"/>';
v += '<g fill="none" stroke="#1b8ad0" stroke-width="2"><circle cx="16" cy="293" r="3"/><circle cx="16" cy="971" r="3"/></g>';
v += '<path d="M18 314v10l5-5z" fill="#eee"/>';
document.getElementById('ruler-v').innerHTML = v;
```
